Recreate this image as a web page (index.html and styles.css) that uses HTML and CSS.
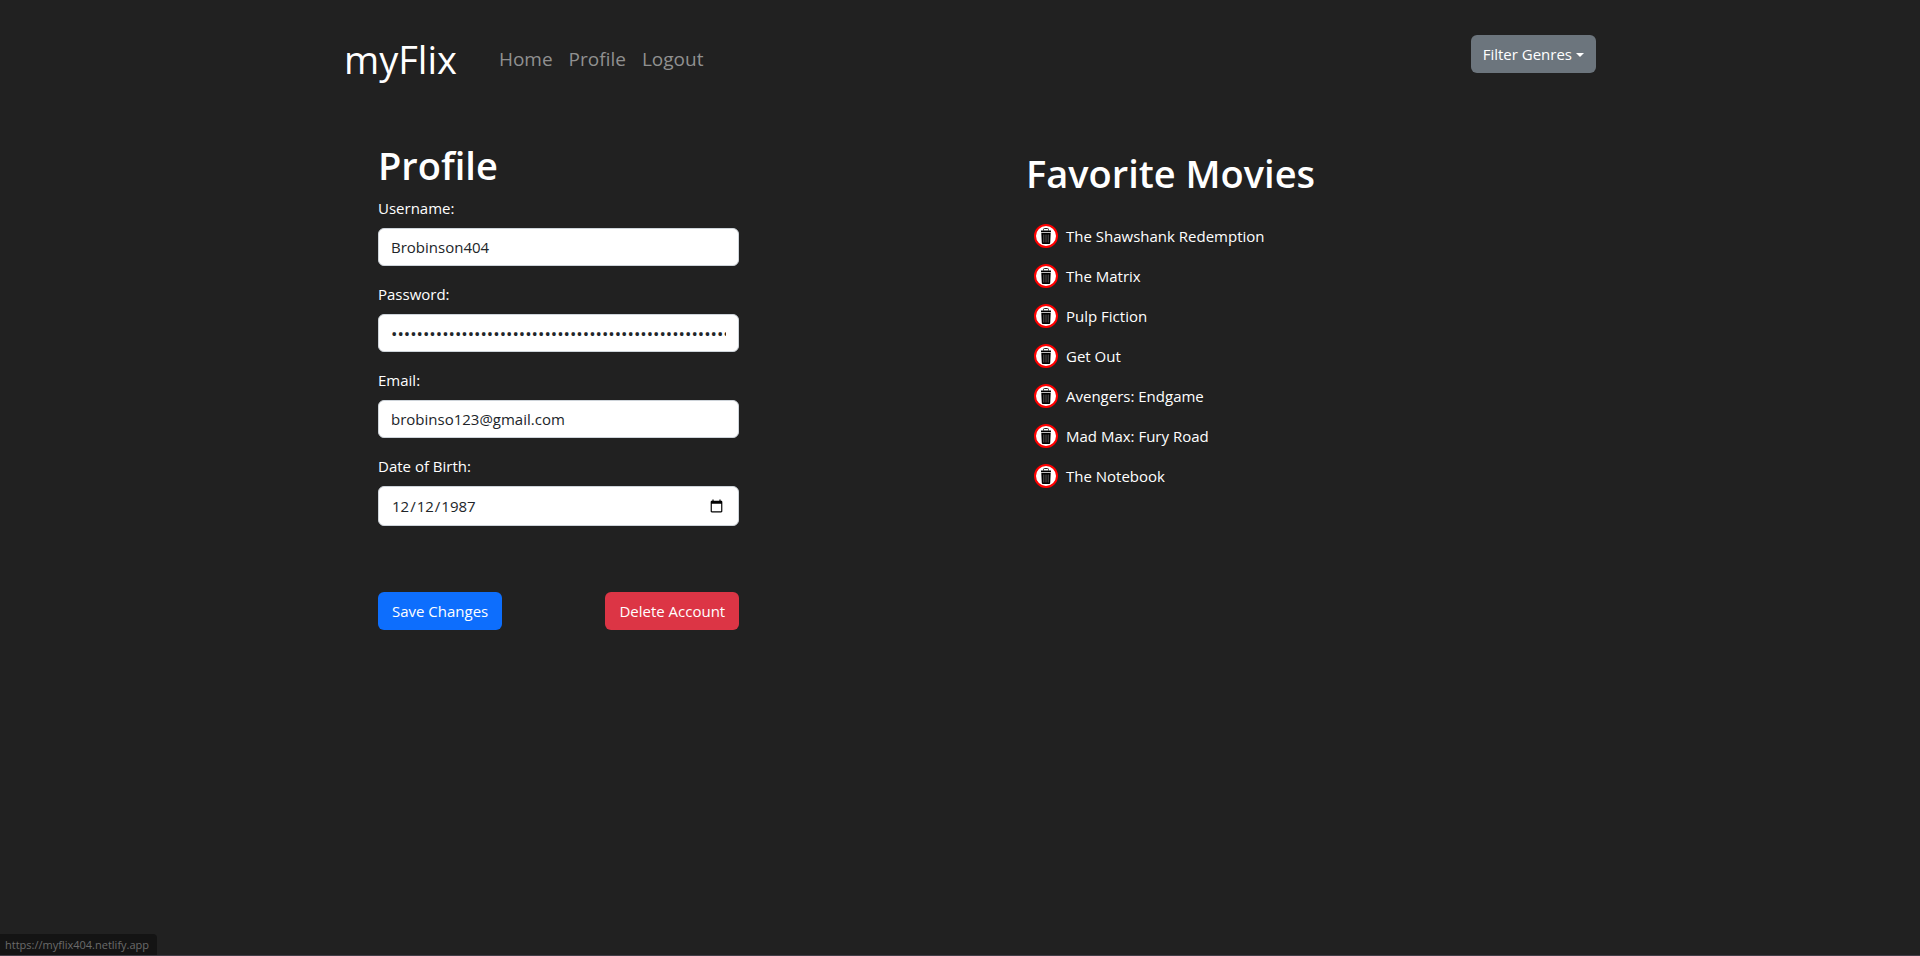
FILE: index.html
```html
<!DOCTYPE html>
<html lang="en">
<head>
<meta charset="utf-8">
<title>myFlix</title>
<link rel="stylesheet" href="styles.css">
</head>
<body>
<svg class="sprite" aria-hidden="true">
  <symbol id="trash" viewBox="0 0 16 16">
    <path d="M5.500 2.500V1.500Q5.500.5 6.500.5h3Q10.500.5 10.500 1.500V2.500" fill="none" stroke="#222"/>
    <path d="M3 2.500h10V4.200H3zM3.300 5h9.400l-.5 10Q12.100 16 11.200 16H4.800q-.9 0-1-1z" fill="#000"/>
    <path d="M5.800 6.500v8M8 6.500v8M10.200 6.500v8" stroke="#777" stroke-width=".8" fill="none"/>
  </symbol>
</svg>
<div class="container">
  <header class="navbar">
    <a class="brand" href="#">myFlix</a>
    <nav class="nav">
      <a href="#">Home</a>
      <a href="#">Profile</a>
      <a href="#">Logout</a>
    </nav>
    <button class="btn btn-secondary" type="button">Filter Genres<span class="caret"></span></button>
  </header>
  <main class="row">
    <section class="col">
      <h1>Profile</h1>
      <form class="form">
        <div class="field"><label for="user">Username:</label><input id="user" type="text" value="Brobinson404"></div>
        <div class="field"><label for="pass">Password:</label><input id="pass" class="password" type="password" value="passwordpasswordpasswordpasswordpasswordpasswordpasswordpassword"></div>
        <div class="field"><label for="mail">Email:</label><input id="mail" type="email" value="brobinso123@gmail.com"></div>
        <div class="field"><label for="birth">Date of Birth:</label><input id="birth" class="date" type="date" value="1987-12-12"></div>
        <div class="actions">
          <button class="btn btn-primary" type="button">Save Changes</button>
          <button class="btn btn-danger" type="button">Delete Account</button>
        </div>
      </form>
    </section>
    <section class="col favorites">
      <h1>Favorite Movies</h1>
      <ul class="movies">
        <li><button class="remove" type="button" aria-label="Remove The Shawshank Redemption"><svg><use href="#trash"/></svg></button>The Shawshank Redemption</li>
        <li><button class="remove" type="button" aria-label="Remove The Matrix"><svg><use href="#trash"/></svg></button>The Matrix</li>
        <li><button class="remove" type="button" aria-label="Remove Pulp Fiction"><svg><use href="#trash"/></svg></button>Pulp Fiction</li>
        <li><button class="remove" type="button" aria-label="Remove Get Out"><svg><use href="#trash"/></svg></button>Get Out</li>
        <li><button class="remove" type="button" aria-label="Remove Avengers: Endgame"><svg><use href="#trash"/></svg></button>Avengers: Endgame</li>
        <li><button class="remove" type="button" aria-label="Remove Mad Max: Fury Road"><svg><use href="#trash"/></svg></button>Mad Max: Fury Road</li>
        <li><button class="remove" type="button" aria-label="Remove The Notebook"><svg><use href="#trash"/></svg></button>The Notebook</li>
      </ul>
    </section>
  </main>
</div>
<div class="status">https://myflix404.netlify.app</div>
</body>
</html>
```
FILE: styles.css
```css
*, *::before, *::after { box-sizing: border-box; }
body {
  margin: 0;
  min-height: 100vh;
  background: #212121;
  border-bottom: 1px solid #433e48;
  color: #fff;
  font: 15px/24px "Open Sans", "Noto Sans", sans-serif;
}
.sprite { display: none; }
.container { max-width: 1320px; margin: 0 auto; padding: 0 12px; }
.navbar {
  display: flex;
  align-items: center;
  padding: 24px 12px 0 32px;
}
.brand { color: #fff; font-size: 38px; line-height: 70px; text-decoration: none; }
.nav { display: flex; gap: 16px; margin-left: 42px; font-size: 19px; line-height: 30px; }
.nav a { color: #909090; text-decoration: none; }
.btn {
  height: 38px;
  padding: 0 14px;
  border: 0;
  border-radius: 6px;
  color: #fff;
  font: inherit;
  white-space: nowrap;
}
.btn-secondary { margin-left: auto; margin-bottom: 10px; padding: 0 12px; background: #6c757d; }
.btn-primary { background: #0d6efd; }
.btn-danger { background: #dc3545; }
.caret {
  display: inline-block;
  margin-left: 4px;
  vertical-align: 3px;
  border: 4px solid transparent;
  border-top-color: #fff;
  border-bottom: 0;
}
.row { display: grid; grid-template-columns: 1fr 1fr; padding-top: 46px; }
.col { padding: 0 66px; }
h1 { margin: 0 0 6px; font-size: 38px; line-height: 50px; font-weight: 600; }
.form { width: 70%; }
.field { margin-bottom: 16px; }
label { display: block; margin-bottom: 8px; }
input {
  display: block;
  width: 100%;
  height: 38px;
  padding: 6px 12px;
  border: 1px solid #ced4da;
  border-radius: 6px;
  background: #fff;
  color: #212529;
  font: inherit;
}
.password { font-size: 17px; }
.date { height: 40px; }
.actions { display: flex; justify-content: space-between; padding-top: 50px; }
.favorites { padding-top: 8px; }
.movies { margin: 0; padding: 12px 0 0 8px; list-style: none; }
.movies li { display: flex; align-items: center; gap: 8px; height: 40px; }
.remove {
  display: grid;
  place-items: center;
  width: 24px;
  height: 24px;
  padding: 0;
  border: 2px solid #f00;
  border-radius: 50%;
  background: #fff;
}
.remove svg { width: 16px; height: 16px; }
.status {
  position: fixed;
  left: 0;
  bottom: 1px;
  padding: 0 8px 0 5px;
  border-radius: 0 4px 0 0;
  background: #141414;
  color: #6b6b6b;
  font-size: 11px;
  line-height: 21px;
}
```
